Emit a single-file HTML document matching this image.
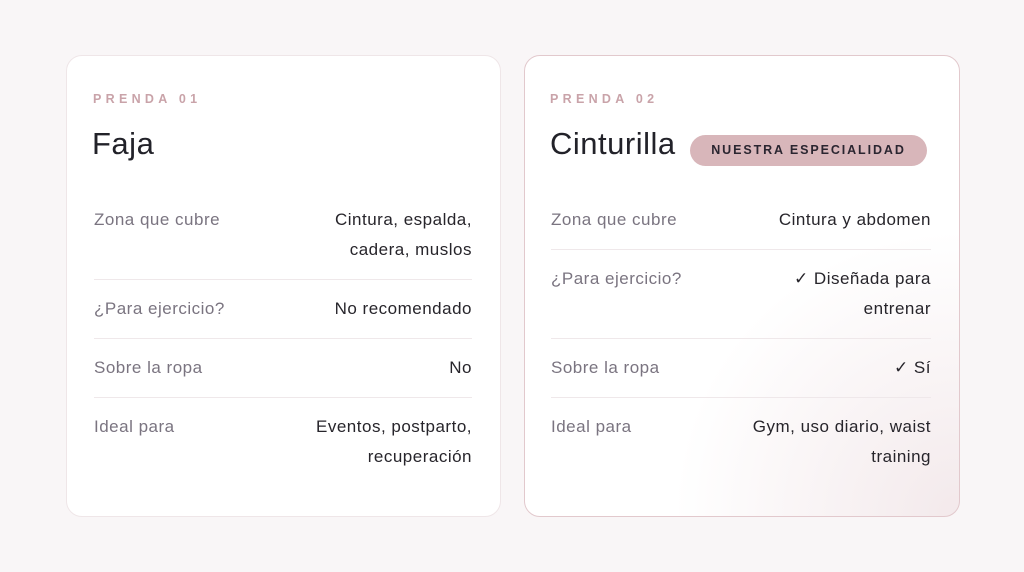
<!DOCTYPE html>
<html><head><meta charset="utf-8"><style>
*{margin:0;padding:0;box-sizing:border-box}
body{width:1024px;height:572px;background:#f9f6f7;font-family:"Liberation Sans",sans-serif;position:relative;overflow:hidden}
.card{position:absolute;top:55px;height:462px;background:#fff;border-radius:16px;border:1px solid #efe6e8;padding:0 27px}
.c1{left:66px;width:435px}
.c2{left:524px;width:436px;border:1.5px solid #e2c9cd;background:radial-gradient(circle at 100% 100%,#f3e9eb 0,#fff 45%)}
.lab{position:absolute;font-size:12.5px;letter-spacing:4.3px;color:#c9a3a9;font-weight:bold}
.ttl{position:absolute;font-size:31px;color:#222229;letter-spacing:.5px}
.badge{position:absolute;left:165px;top:79px;width:237px;height:31px;border-radius:16px;background:#d8b6ba;color:#2a2530;font-size:12.5px;font-weight:bold;letter-spacing:1.9px;text-align:center;line-height:31px}
.rows{position:absolute;left:27px;right:28px}
.row{display:flex;justify-content:space-between;padding:14px 0;border-bottom:1px solid #efe8ea;font-size:17px;line-height:30px;letter-spacing:.5px}
.row:last-child{border-bottom:none}
.k{color:#7a7480}
.v{color:#27252b;text-align:right}
</style></head><body>
<div class="card c1">
<div class="lab" style="left:26px;top:36px">PRENDA 01</div>
<div class="ttl" style="left:25px;top:70px">Faja</div>
<div class="rows" style="top:135px">
<div class="row"><span class="k">Zona que cubre</span><span class="v">Cintura, espalda,<br>cadera, muslos</span></div>
<div class="row"><span class="k">¿Para ejercicio?</span><span class="v">No recomendado</span></div>
<div class="row"><span class="k">Sobre la ropa</span><span class="v">No</span></div>
<div class="row"><span class="k">Ideal para</span><span class="v">Eventos, postparto,<br>recuperación</span></div>
</div>
</div>
<div class="card c2">
<div class="lab" style="left:25px;top:36px">PRENDA 02</div>
<div class="ttl" style="left:25px;top:70px">Cinturilla</div>
<div class="badge">NUESTRA ESPECIALIDAD</div>
<div class="rows" style="top:135px;left:26px">
<div class="row"><span class="k">Zona que cubre</span><span class="v">Cintura y abdomen</span></div>
<div class="row"><span class="k">¿Para ejercicio?</span><span class="v">✓ Diseñada para<br>entrenar</span></div>
<div class="row"><span class="k">Sobre la ropa</span><span class="v">✓ Sí</span></div>
<div class="row"><span class="k">Ideal para</span><span class="v">Gym, uso diario, waist<br>training</span></div>
</div>
</div>
</body></html>
